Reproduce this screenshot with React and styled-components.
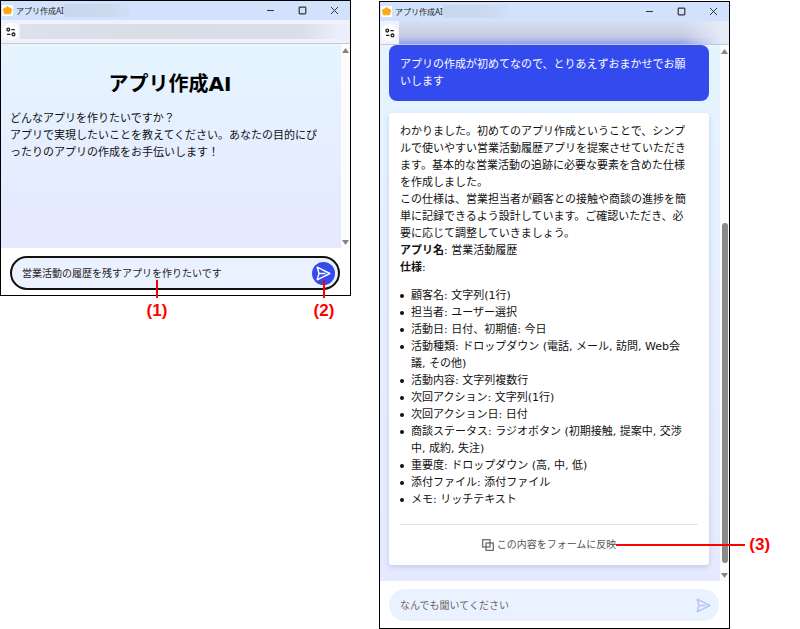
import React, { useState } from "react";
import styled, { createGlobalStyle } from "styled-components";

const GlobalStyle = createGlobalStyle`
  *, *::before, *::after {
    box-sizing: border-box;
  }
  body {
    margin: 0;
    background: #fff;
    color: #111;
    font-family: "DejaVu Sans", "Noto Sans CJK JP", sans-serif;
    font-size: 11px;
    line-height: 17px;
  }
  button, input {
    font: inherit;
    color: inherit;
  }
  p, h1, ul {
    margin: 0;
  }
`;

const Page = styled.main`
  display: grid;
  grid-template-columns: minmax(0, 1fr) minmax(0, 1fr);
  column-gap: 28px;
  align-items: start;
  padding-right: 70px;
`;

const Column = styled.div`
  padding-top: ${(props) => (props.$lowered ? "1px" : "0")};
`;

const Window = styled.section`
  border: 1px solid #000;
  background: #fff;
`;

const TitleBar = styled.header`
  display: flex;
  align-items: center;
  height: 19px;
  padding-left: 1px;
  background: #d3e2fc;
`;

const WindowName = styled.span`
  margin-left: 3px;
  font-family: "Noto Sans", "Noto Sans CJK JP", sans-serif;
  font-size: 8px;
  white-space: nowrap;
  color: #222;
`;

const HiddenAccount = styled.span`
  width: 66px;
  height: 13px;
  margin-right: auto;
  background: linear-gradient(to right, #c8d7ee, #ccd9ef 70%, #d0dff8);
`;

const ControlButton = styled.button`
  display: flex;
  align-items: center;
  justify-content: center;
  width: 32px;
  height: 19px;
  padding: 0;
  border: none;
  background: none;
  color: #333;
`;

const Toolbar = styled.div`
  display: flex;
  align-items: center;
  height: 24px;
  padding-left: 1px;
  background: #eff2fc;
  border-bottom: 1px solid #c6cad0;
`;

const SiteButton = styled.button`
  display: flex;
  align-items: center;
  justify-content: center;
  flex: none;
  width: 17px;
  height: 17px;
  padding: 0;
  border: none;
  border-radius: 50%;
  background: #fff;
`;

const HiddenAddress = styled.div`
  flex: 1;
  height: ${(props) => (props.$tinted ? "23px" : "15px")};
  margin-left: 1px;
  background: ${(props) =>
    props.$tinted
      ? "linear-gradient(to right, transparent 86%, #e6ebf8 98%), linear-gradient(to bottom, #d4dff2, #ccd3e4 45%, #c3c9e6 70%, #969eea)"
      : "linear-gradient(to right, #dde1eb, #d8dde6 40%, #d9dee9 85%, #eceffa 97%)"};
`;

const Scroller = styled.div`
  display: flex;
  min-height: 204px;
`;

const Chat = styled.div`
  flex: 1;
  min-width: 0;
  display: flex;
  flex-direction: column;
  gap: 12px;
  padding: 0 11px 16px 9px;
  background: linear-gradient(to bottom, #e5f4ff, #e6e9ff);
`;

const Scrollbar = styled.div`
  display: flex;
  flex-direction: column;
  align-items: center;
  flex: none;
  width: 9px;
  background: #fcfcfc;
`;

const Arrow = styled.span`
  display: flex;
  align-items: center;
  justify-content: center;
  height: 12px;
`;

const Track = styled.div`
  flex: 1;
  display: flex;
  flex-direction: column;
`;

const TrackSpace = styled.div`
  flex: ${(props) => props.$size};
`;

const Thumb = styled.div`
  flex: 340;
  width: 6px;
  border-radius: 3px;
  background: #8a8a8a;
`;

const Heading = styled.h1`
  padding: 24px 0 10px;
  font-size: 20px;
  line-height: 32px;
  text-align: center;
  color: #000;
`;

const Intro = styled.p`
  padding-right: 6px;
`;

const UserMessage = styled.p`
  padding: 11px 20px 11px 11px;
  border-radius: 8px;
  background: #334aef;
  color: #fff;
`;

const Reply = styled.article`
  padding: 10px 11px 12px;
  border-radius: 3px;
  background: #fff;
  box-shadow: 0 2px 5px rgba(60, 80, 140, 0.2);
`;

const ReplyText = styled.p`
  padding-right: 9px;
`;

const SpecList = styled.ul`
  margin-top: 11px;
  padding: 0 9px 0 11px;
  list-style: none;
`;

const SpecItem = styled.li`
  position: relative;

  &::before {
    content: "";
    position: absolute;
    top: 7px;
    left: -11px;
    width: 4px;
    height: 4px;
    border-radius: 50%;
    background: #111;
  }
`;

const Divider = styled.hr`
  margin: 16px 0 11px;
  border: none;
  border-top: 1px solid #e3e3e3;
`;

const Centered = styled.div`
  display: flex;
  justify-content: center;
`;

const Marked = styled.div`
  position: relative;
  display: flex;
`;

const ApplyButton = styled.button`
  display: flex;
  align-items: center;
  gap: 3px;
  padding: 0;
  border: none;
  background: none;
  font-size: 10px;
  color: #555;
`;

const Composer = styled.form`
  display: flex;
  align-items: flex-start;
  height: 47px;
  padding: 8px 10px 0 9px;
`;

const Pill = styled.div`
  position: relative;
  flex: 1;
  min-width: 0;
  display: flex;
  align-items: center;
  height: ${(props) => (props.$active ? "34px" : "32px")};
  padding: ${(props) => (props.$active ? "0 3px 0 10px" : "0 4px 0 11px")};
  border: ${(props) => (props.$active ? "2px solid #111" : "none")};
  border-radius: 17px;
  background: #ebf2ff;
`;

const MessageInput = styled.input`
  flex: 1;
  min-width: 0;
  padding: 0;
  border: none;
  outline: none;
  background: none;
  font-size: 10px;
  color: #222;

  &::placeholder {
    color: #666;
    opacity: 1;
  }
`;

const SendButton = styled.button`
  display: flex;
  align-items: center;
  justify-content: center;
  width: 23px;
  height: 23px;
  padding: 0;
  border: none;
  border-radius: 50%;
  background: ${(props) => (props.$active ? "#334aef" : "none")};
  color: ${(props) => (props.$active ? "#fff" : "#b8c5f3")};
`;

// red pointers laid over the two windows
const Callout = styled.span`
  position: absolute;
  display: flex;
  align-items: center;
  z-index: 1;
  color: #f00;
  font-family: "Liberation Sans", sans-serif;
  font-size: 17px;
  font-weight: bold;
  line-height: 18px;
  pointer-events: none;
`;

const DownCallout = styled(Callout)`
  flex-direction: column;
  gap: 4px;
  width: 24px;
  top: ${(props) => (props.$onButton ? "18px" : "22px")};
  left: ${(props) => (props.$onButton ? "0" : "133px")};

  &::before {
    content: "";
    width: 2px;
    height: 18px;
    background: #f00;
  }
`;

const SideCallout = styled(Callout)`
  gap: 4px;
  top: 0;
  left: 100%;

  &::before {
    content: "";
    width: 129px;
    height: 2px;
    background: #f00;
  }
`;

const AppIcon = () => (
  <svg width="11" height="11" viewBox="0 0 11 11">
    <rect width="11" height="11" rx="1" fill="#fff" />
    <path
      d="M5.3 1.3 7.1 2.8 9.7 4 9.2 6.1 8.5 8.8 5.6 8.7 2.7 9 1.8 6.2 1.2 4 3.7 3z"
      fill="#fba919"
      stroke="#fba919"
      strokeWidth="1"
      strokeLinejoin="round"
    />
  </svg>
);

const TuneIcon = () => (
  <svg width="10" height="10" viewBox="0 0 10 10" fill="none" stroke="#222" strokeWidth="1.3">
    <circle cx="2.3" cy="2.6" r="1.4" />
    <path d="M5.4 2.6h3.4M1 7.4h3.4" />
    <circle cx="7.5" cy="7.4" r="1.4" />
  </svg>
);

const MinimizeIcon = () => (
  <svg width="9" height="9" viewBox="0 0 9 9" stroke="currentColor">
    <path d="M1 4.5h7" />
  </svg>
);

const MaximizeIcon = () => (
  <svg width="9" height="9" viewBox="0 0 9 9" fill="none" stroke="currentColor" strokeWidth="1.2">
    <rect x="1.2" y="1.2" width="6.6" height="6.6" rx="0.8" />
  </svg>
);

const CloseIcon = () => (
  <svg width="9" height="9" viewBox="0 0 9 9" stroke="currentColor">
    <path d="M1 1l7 7M8 1l-7 7" />
  </svg>
);

const SendIcon = () => (
  <svg
    width="15"
    height="15"
    viewBox="0 0 15 15"
    fill="none"
    stroke="currentColor"
    strokeWidth="1.4"
    strokeLinejoin="round"
  >
    <path d="M1.2 1.2 13.8 7.5 1.2 13.8 3 7.5zM3 7.5h6.5" />
  </svg>
);

const CopyIcon = () => (
  <svg width="12" height="12" viewBox="0 0 12 12" fill="none" stroke="#555" strokeWidth="1.1">
    <rect x="0.7" y="0.7" width="7.3" height="7.3" />
    <rect x="4" y="4" width="7.3" height="7.3" />
  </svg>
);

const ArrowIcon = ({ down }) => (
  <svg width="7" height="5" viewBox="0 0 7 5" fill="#858585">
    <path d={down ? "M0 0h7L3.5 5z" : "M0 5h7L3.5 0z"} />
  </svg>
);

const specs = [
  "顧客名: 文字列(1行)",
  "担当者: ユーザー選択",
  "活動日: 日付、初期値: 今日",
  "活動種類: ドロップダウン (電話, メール, 訪問, Web会議, その他)",
  "活動内容: 文字列複数行",
  "次回アクション: 文字列(1行)",
  "次回アクション日: 日付",
  "商談ステータス: ラジオボタン (初期接触, 提案中, 交渉中, 成約, 失注)",
  "重要度: ドロップダウン (高, 中, 低)",
  "添付ファイル: 添付ファイル",
  "メモ: リッチテキスト",
];

const AppWindow = ({ tinted, scrolled, children, composer }) => (
  <Window>
    <TitleBar>
      <AppIcon />
      <WindowName>アプリ作成AI</WindowName>
      <HiddenAccount />
      <ControlButton type="button" aria-label="最小化">
        <MinimizeIcon />
      </ControlButton>
      <ControlButton type="button" aria-label="最大化">
        <MaximizeIcon />
      </ControlButton>
      <ControlButton type="button" aria-label="閉じる">
        <CloseIcon />
      </ControlButton>
    </TitleBar>
    <Toolbar>
      <SiteButton type="button" aria-label="サイト情報">
        <TuneIcon />
      </SiteButton>
      <HiddenAddress $tinted={tinted} />
    </Toolbar>
    <Scroller>
      <Chat>{children}</Chat>
      <Scrollbar>
        <Arrow>
          <ArrowIcon />
        </Arrow>
        <Track>
          {scrolled && (
            <>
              <TrackSpace $size={166} />
              <Thumb />
              <TrackSpace $size={6} />
            </>
          )}
        </Track>
        <Arrow>
          <ArrowIcon down />
        </Arrow>
      </Scrollbar>
    </Scroller>
    {composer}
  </Window>
);

const MessageForm = ({ initial = "", active, mark, sendMark }) => {
  const [message, setMessage] = useState(initial);

  return (
    <Composer onSubmit={(e) => e.preventDefault()}>
      <Pill $active={active}>
        <MessageInput
          type="text"
          aria-label="メッセージ"
          placeholder="なんでも聞いてください"
          value={message}
          onChange={(e) => setMessage(e.target.value)}
        />
        {mark && <DownCallout>{mark}</DownCallout>}
        <Marked>
          <SendButton type="submit" aria-label="送信" $active={active}>
            <SendIcon />
          </SendButton>
          {sendMark && <DownCallout $onButton>{sendMark}</DownCallout>}
        </Marked>
      </Pill>
    </Composer>
  );
};

const App = () => (
  <>
    <GlobalStyle />
    <Page>
      <Column>
        <AppWindow
          composer={
            <MessageForm
              initial="営業活動の履歴を残すアプリを作りたいです"
              active
              mark="(1)"
              sendMark="(2)"
            />
          }
        >
          <div>
            <Heading>アプリ作成AI</Heading>
            <Intro>
              どんなアプリを作りたいですか？
              <br />
              アプリで実現したいことを教えてください。あなたの目的にぴったりのアプリの作成をお手伝いします！
            </Intro>
          </div>
        </AppWindow>
      </Column>

      <Column $lowered>
        <AppWindow tinted scrolled composer={<MessageForm />}>
          <UserMessage>
            アプリの作成が初めてなので、とりあえずおまかせでお願いします
          </UserMessage>
          <Reply>
            <ReplyText>
              わかりました。初めてのアプリ作成ということで、シンプルで使いやすい営業活動履歴アプリを提案させていただきます。基本的な営業活動の追跡に必要な要素を含めた仕様を作成しました。
            </ReplyText>
            <ReplyText>
              この仕様は、営業担当者が顧客との接触や商談の進捗を簡単に記録できるよう設計しています。ご確認いただき、必要に応じて調整していきましょう。
            </ReplyText>
            <ReplyText>
              <strong>アプリ名</strong>: 営業活動履歴
            </ReplyText>
            <ReplyText>
              <strong>仕様</strong>:
            </ReplyText>
            <SpecList>
              {specs.map((spec) => (
                <SpecItem key={spec}>{spec}</SpecItem>
              ))}
            </SpecList>
            <Divider />
            <Centered>
              <Marked>
                <ApplyButton type="button">
                  <CopyIcon />
                  この内容をフォームに反映
                </ApplyButton>
                <SideCallout>(3)</SideCallout>
              </Marked>
            </Centered>
          </Reply>
        </AppWindow>
      </Column>
    </Page>
  </>
);

export default App;
